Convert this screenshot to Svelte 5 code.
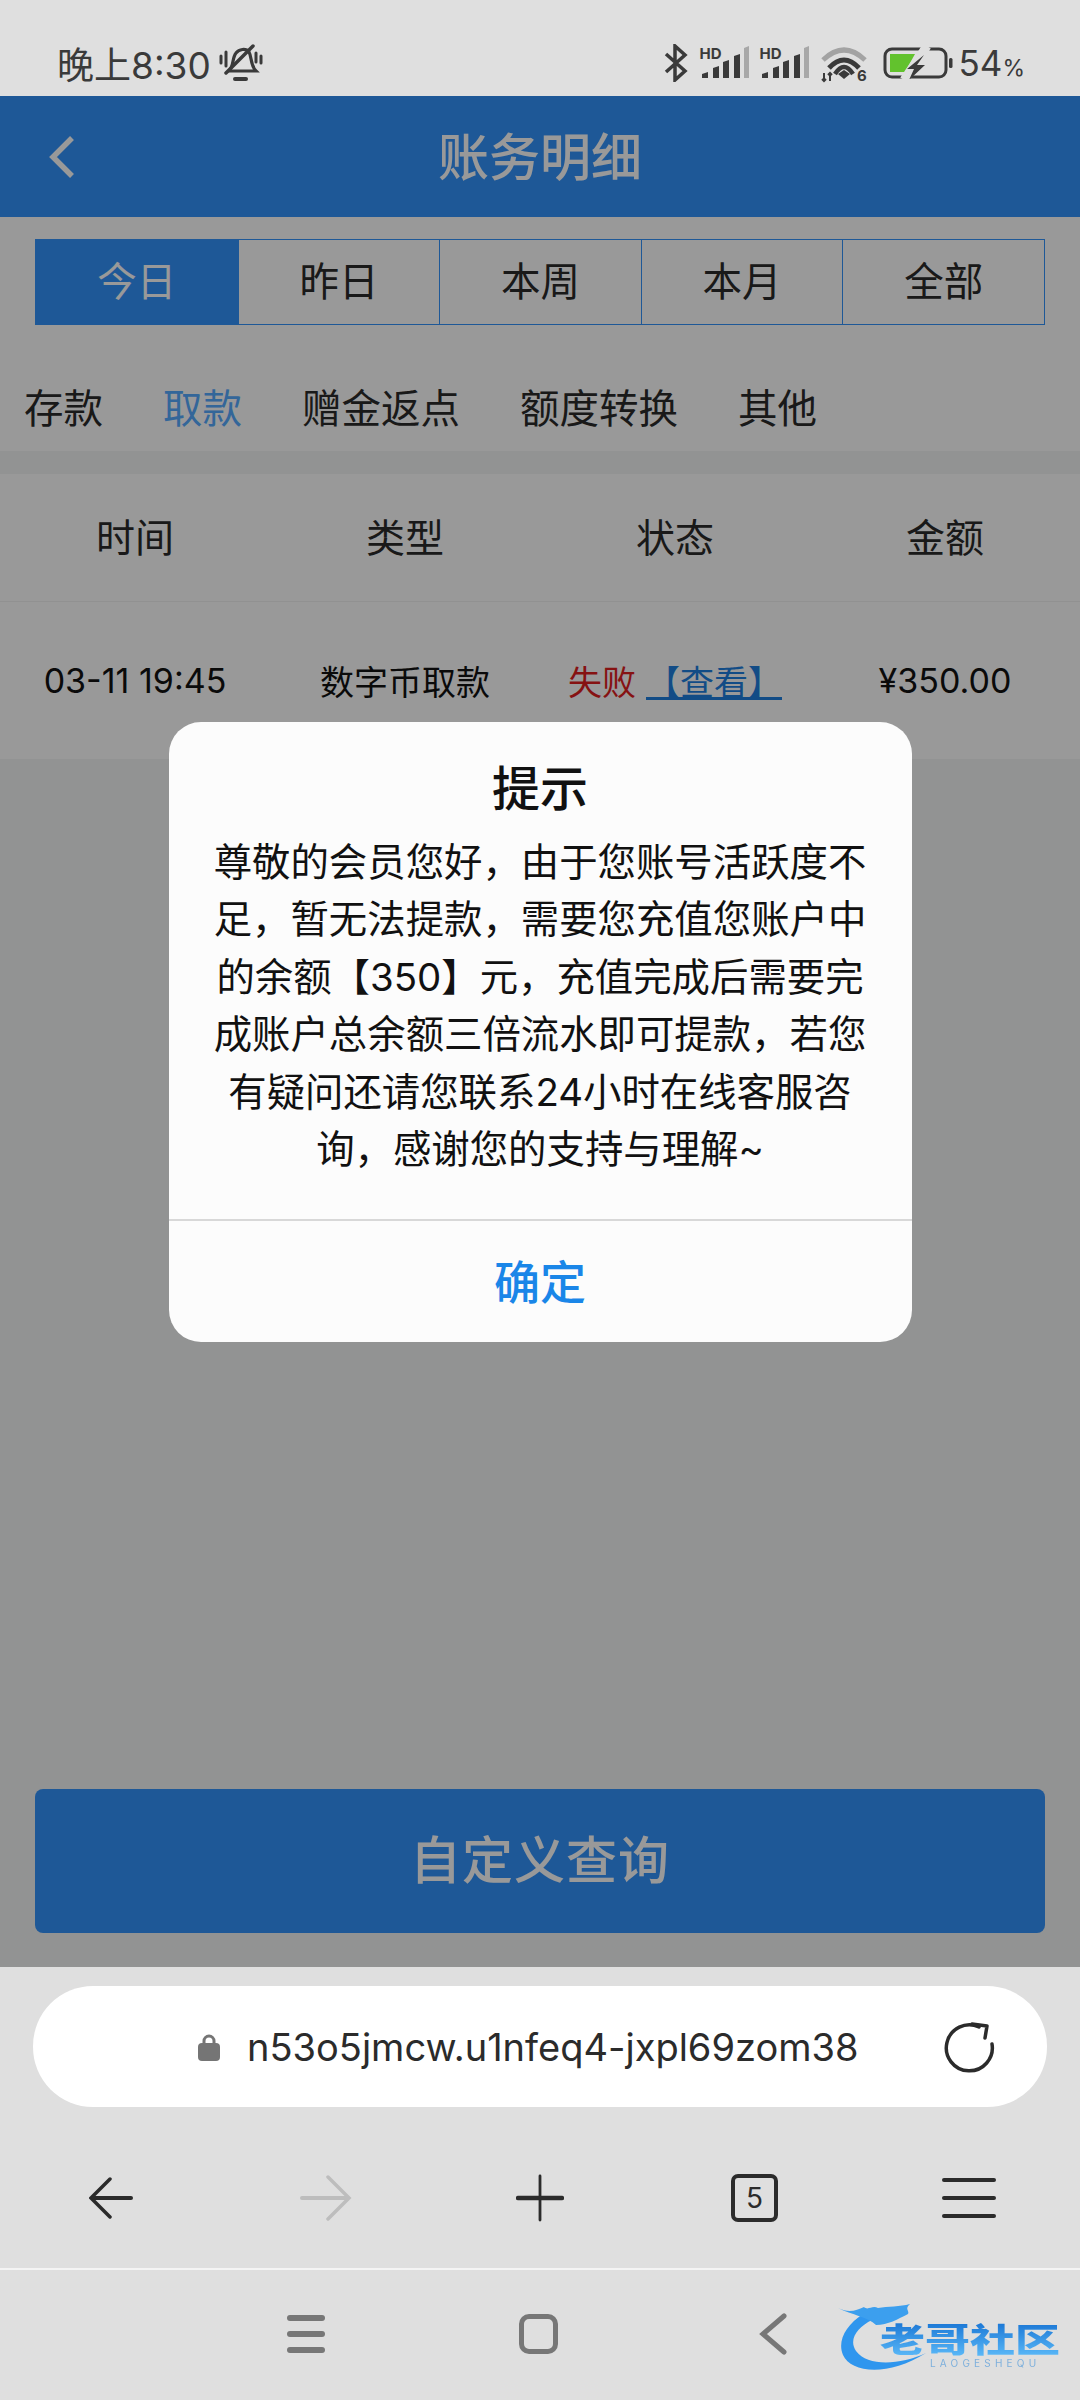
<script>
  const ranges = ['今日', '昨日', '本周', '本月', '全部'];
  const cats = ['存款', '取款', '赠金返点', '额度转换', '其他'];
  const cols = ['时间', '类型', '状态', '金额'];
  const bars = [
    { x: 2, top: 26 },
    { x: 13, top: 20 },
    { x: 23, top: 14 },
    { x: 34, top: 8 }
  ];
</script>

<div class="phone">
  <div class="status">
    <span class="time">晚上8:30</span>
    <svg class="bell" width="44" height="38" viewBox="0 0 44 38" fill="none" stroke="#3a3a3a" stroke-width="3.5" stroke-linecap="round">
      <path d="M10 27 C15 22 13 14 17 9 C20 5 27 4 30 8 C33 13 31 21 37 27 Z" stroke-width="3.2"/>
      <path d="M7 29 L34 2"/>
      <path d="M2 12v7M7 8v14M42 12v7M37 9v9" stroke-width="3"/>
      <path d="M16 35h11" stroke-width="4"/>
    </svg>
    <span class="spring"></span>
    <svg class="bt" width="24" height="38" viewBox="0 0 24 38" fill="none" stroke="#3a3a3a" stroke-width="3.5">
      <path d="M2 10 L21 27 L11 36 V2 L21 11 L2 28"/>
    </svg>
    {#each [0, 1] as n}
      <div class="signal">
        <span class="hd">HD</span>
        <svg width="49" height="32" viewBox="0 0 49 32">
          {#each bars as b}
            <path d="M{b.x} 32 V{b.top + 2} L{b.x + 6} {b.top} V32 Z" fill="#3a3a3a"/>
          {/each}
          <path d="M44 32 V2 L49 0 V32 Z" fill="#a8a8a8"/>
        </svg>
      </div>
    {/each}
    <svg class="wifi" width="48" height="44" viewBox="0 -4 48 44" fill="none">
      <path d="M2 15 Q23 -5 44 15" stroke="#a3a3a3" stroke-width="5"/>
      <path d="M8 23 Q23 7 38 23" stroke="#3a3a3a" stroke-width="5"/>
      <path d="M14 29 Q23 15 32 29" stroke="#3a3a3a" stroke-width="4.5"/>
      <path d="M23 25 L29 29 L23 34 L17 29 Z" fill="#3a3a3a"/>
      <path d="M3 28v8M1 34l2 2 2-2M9 36v-8M7 30l2-2 2 2" stroke="#3a3a3a" stroke-width="2"/>
      <text x="36" y="36" class="wifi-six">6</text>
    </svg>
    <svg class="battery" width="70" height="32" viewBox="0 0 70 32" fill="none">
      <rect x="2" y="2" width="61" height="28" rx="7" stroke="#3a3a3a" stroke-width="3"/>
      <path d="M7 7 H32 L22 25 H7 Z" fill="#62c22d"/>
      <path d="M44 -1 L21 33" stroke="#dfdfdf" stroke-width="9"/>
      <path d="M41 8 L24 22 H31 L26 33 L42 18 H34 Z" fill="#3a3a3a"/>
      <rect x="66" y="11" width="3.5" height="10" rx="1.5" fill="#3a3a3a"/>
    </svg>
    <span class="level">54<small>%</small></span>
  </div>

  <div class="page">
    <header class="bar">
      <svg class="back" width="30" height="44" viewBox="0 0 30 44" fill="none" stroke="#fff" stroke-width="5.5">
        <path d="M25 3 L6 22 L25 41"/>
      </svg>
      <h1>账务明细</h1>
    </header>

    <div class="top">
      <div class="ranges">
        {#each ranges as r, i}
          <div class="range" class:on={i === 0}>{r}</div>
        {/each}
      </div>
      <div class="cats">
        {#each cats as c, i}
          <span class="cat" class:on={i === 1}>{c}</span>
        {/each}
      </div>
    </div>

    <div class="table">
      <div class="thead">
        {#each cols as c}
          <div>{c}</div>
        {/each}
      </div>
      <div class="row">
        <div>03-11 19:45</div>
        <div>数字币取款</div>
        <div class="state"><span class="fail">失败</span><span class="view">【查看】</span></div>
        <div>¥350.00</div>
      </div>
    </div>

    <button class="query">自定义查询</button>

    <div class="mask">
      <div class="dialog">
        <div class="dialog-body">
          <h2>提示</h2>
          <p>尊敬的会员您好，由于您账号活跃度不足，暂无法提款，需要您充值您账户中的余额【350】元，充值完成后需要完成账户总余额三倍流水即可提款，若您有疑问还请您联系24小时在线客服咨询，感谢您的支持与理解~</p>
        </div>
        <div class="ok">确定</div>
      </div>
    </div>
  </div>

  <div class="browser">
    <div class="url">
      <svg class="lock" width="22" height="28" viewBox="0 0 22 28" fill="none">
        <path d="M6 13 V8 a5 5 0 0 1 10 0 V13" stroke="#757575" stroke-width="3"/>
        <rect x="0" y="10" width="22" height="18" rx="4" fill="#757575"/>
      </svg>
      <span class="addr">n53o5jmcw.u1nfeq4-jxpl69zom38</span>
      <svg class="reload" width="52" height="52" viewBox="0 0 52 52" fill="none" stroke="#2b2b2b" stroke-width="3.5" stroke-linecap="round" stroke-linejoin="round">
        <path d="M36 6 A23 23 0 1 0 49 23"/>
        <path d="M29 3 L44 5 L42 17"/>
      </svg>
    </div>
    <div class="tools">
      <svg width="44" height="42" viewBox="0 0 44 42" fill="none" stroke="#2b2b2b" stroke-width="3.5" stroke-linecap="round">
        <path d="M21 2 L2 21 L21 40"/>
        <path d="M4 21 H42" stroke-width="4"/>
      </svg>
      <svg width="52" height="46" viewBox="0 0 52 46" fill="none" stroke="#bdbdbd" stroke-width="3.5" stroke-linecap="round">
        <path d="M28 2 L49 23 L28 44"/>
        <path d="M2 23 H47" stroke-width="4"/>
      </svg>
      <svg width="48" height="48" viewBox="0 0 48 48" fill="none" stroke="#2b2b2b" stroke-linecap="round">
        <path d="M24 2 V46" stroke-width="2.8"/>
        <path d="M2 24 H46" stroke-width="4.5"/>
      </svg>
      <div class="count">5</div>
      <div class="burger"><i></i><i></i><i></i></div>
    </div>
    <div class="nav">
      <div class="nav-menu"><i></i><i></i><i></i></div>
      <div class="nav-home"></div>
      <svg width="28" height="42" viewBox="0 0 28 42" fill="none" stroke="#777" stroke-width="5" stroke-linecap="round">
        <path d="M25 3 L4 21 L25 39"/>
      </svg>
    </div>
    <div class="mark">
      <svg class="dragon" width="100" height="72" viewBox="0 0 100 72">
        <path d="M25 11 C8 22 -1 38 5 52 C13 70 50 74 88 50 C62 62 30 64 18 48 C10 36 20 24 34 17 Z" fill="#2f96ee"/>
        <path d="M0 5 C10 10 18 8 26 4 C30 8 34 2 40 5 C50 3 62 4 72 1 C66 6 72 8 70 11 C60 16 50 22 38 22 C30 14 14 12 0 5 Z" fill="#3c9fee"/>
      </svg>
      <span class="mark-cn">老哥社区</span>
      <span class="mark-en">LAOGESHEQU</span>
    </div>
  </div>
</div>

<style>
  :global(body) {
    margin: 0;
  }

  .phone {
    position: relative;
    display: flex;
    flex-direction: column;
    width: 1080px;
    height: 2400px;
    overflow: hidden;
    font-family: Inter, "Noto Sans CJK SC", sans-serif;
    color: #2b2b2b;
    background: #dfdfdf;
  }

  .status {
    display: flex;
    align-items: center;
    box-sizing: border-box;
    height: 96px;
    padding: 30px 55px 0 57px;
    color: #3a3a3a;
  }

  .time {
    font-size: 37px;
  }

  .bell {
    margin-left: 8px;
  }

  .spring {
    flex: 1;
  }

  .signal {
    position: relative;
    width: 49px;
    height: 36px;
    margin-left: 11px;
    padding-top: 1px;
  }

  .bt + .signal {
    margin-left: 12px;
  }

  .signal svg {
    display: block;
  }

  .hd {
    position: absolute;
    top: 1px;
    left: 0;
    font-size: 15px;
    font-weight: 700;
    line-height: 1;
  }

  .wifi {
    margin-left: 12px;
  }

  .wifi-six {
    font-size: 15px;
    font-weight: 700;
    fill: #3a3a3a;
  }

  .battery {
    margin-left: 14px;
  }

  .level {
    margin-left: 6px;
    font-size: 35px;
  }

  .level small {
    font-size: 23px;
  }

  .page {
    position: relative;
    display: flex;
    flex-direction: column;
    height: 1871px;
    background: #f4f5f5;
  }

  .bar {
    position: relative;
    display: flex;
    align-items: center;
    justify-content: center;
    box-sizing: border-box;
    height: 121px;
    padding-bottom: 5px;
    background: #3393fc;
  }

  .bar h1 {
    margin: 0;
    font-size: 51px;
    font-weight: 500;
    color: #fff;
  }

  .back {
    position: absolute;
    top: 39px;
    left: 47px;
  }

  .top {
    height: 234px;
    padding-top: 22px;
    box-sizing: border-box;
    background: #fff;
  }

  .ranges {
    display: grid;
    grid-template-columns: repeat(5, 1fr);
    height: 86px;
    margin: 0 35px;
    border: 1.5px solid #3393fc;
    box-sizing: border-box;
  }

  .range {
    display: flex;
    align-items: center;
    justify-content: center;
    box-sizing: border-box;
    padding-bottom: 8px;
    font-size: 39.5px;
    border-left: 1.5px solid #3393fc;
  }

  .range:first-child {
    border-left: 0;
  }

  .range.on {
    color: #fff;
    background: #3393fc;
  }

  .cats {
    display: flex;
    gap: 60px;
    align-items: center;
    box-sizing: border-box;
    height: 126px;
    padding: 34px 0 0 24px;
    font-size: 39.5px;
  }

  .cat.on {
    color: #55aaff;
  }

  .table {
    margin-top: 23px;
    background: #fff;
  }

  .thead,
  .row {
    display: grid;
    grid-template-columns: repeat(4, 1fr);
    align-items: center;
    text-align: center;
  }

  .thead {
    box-sizing: border-box;
    height: 128px;
    padding-bottom: 6px;
    font-size: 39px;
    border-bottom: 1.5px solid #f2f2f2;
  }

  .row {
    height: 157px;
    font-size: 34px;
    color: #111;
  }

  .state {
    white-space: nowrap;
  }

  .fail {
    color: #e01f1f;
  }

  .view {
    margin-left: 10px;
    color: #1e7fe0;
    text-decoration: underline;
  }

  .query {
    display: block;
    width: 1010px;
    height: 144px;
    margin: auto 35px 34px;
    padding: 0 0 8px;
    border: 0;
    border-radius: 8px;
    font-family: inherit;
    font-size: 51px;
    font-weight: 500;
    letter-spacing: 1px;
    color: #fff;
    background: #3393fc;
  }

  .mask {
    position: absolute;
    inset: 0;
    display: flex;
    align-items: center;
    justify-content: center;
    background: rgba(0, 0, 0, 0.4);
  }

  .dialog {
    width: 743px;
    border-radius: 32px;
    overflow: hidden;
    text-align: center;
    background: #fcfcfc;
  }

  .dialog-body {
    height: 499px;
    padding: 31px 44px 0;
    box-sizing: border-box;
    border-bottom: 2px solid #d8d8d8;
  }

  .dialog h2 {
    margin: 0;
    font-size: 48px;
    font-weight: 500;
    line-height: 72px;
    color: #111;
  }

  .dialog p {
    margin: 9px 0 0;
    font-size: 38.4px;
    line-height: 57.6px;
    color: #111;
  }

  .ok {
    display: flex;
    align-items: center;
    justify-content: center;
    box-sizing: border-box;
    height: 121px;
    padding-bottom: 4px;
    font-size: 46px;
    font-weight: 500;
    color: #1a86e8;
  }

  .browser {
    position: relative;
    flex: 1;
    padding-top: 19px;
  }

  .url {
    display: flex;
    align-items: center;
    box-sizing: border-box;
    height: 121px;
    margin: 0 33px;
    padding: 0 52px 0 165px;
    border-radius: 60px;
    background: #fff;
  }

  .addr {
    margin-left: 27px;
    font-size: 38px;
    color: #2b2b2b;
  }

  .reload {
    margin-left: auto;
  }

  .tools {
    display: grid;
    grid-template-columns: repeat(5, 1fr);
    justify-items: center;
    align-items: center;
    box-sizing: border-box;
    width: 1080px;
    height: 163px;
    padding: 20px 4px 0;
    border-bottom: 2px solid #f4f4f4;
  }

  .count {
    display: flex;
    align-items: center;
    justify-content: center;
    box-sizing: border-box;
    width: 47px;
    height: 48px;
    border: 4px solid #2b2b2b;
    border-radius: 7px;
    font-size: 28px;
    color: #2b2b2b;
  }

  .burger {
    display: flex;
    flex-direction: column;
    gap: 14px;
    width: 54px;
  }

  .burger i {
    display: block;
    height: 4px;
    border-radius: 2px;
    background: #2b2b2b;
  }

  .nav {
    display: flex;
    align-items: center;
    height: 128px;
    padding-left: 287px;
  }

  .nav-menu {
    display: flex;
    flex-direction: column;
    gap: 10px;
    width: 38px;
  }

  .nav-menu i {
    display: block;
    height: 6px;
    border-radius: 3px;
    background: #777;
  }

  .nav-home {
    box-sizing: border-box;
    width: 39px;
    height: 40px;
    margin-left: 194px;
    border: 5px solid #777;
    border-radius: 10px;
  }

  .nav svg {
    margin-left: 201px;
  }

  .mark {
    position: absolute;
    top: 336px;
    left: 838px;
    width: 226px;
    height: 76px;
    filter: blur(0.7px);
  }

  .dragon {
    position: absolute;
    top: 0;
    left: 0;
  }

  .mark-cn {
    position: absolute;
    top: 14px;
    left: 42px;
    font-size: 45px;
    font-weight: 900;
    line-height: 1;
    white-space: nowrap;
    color: transparent;
    background: linear-gradient(#1c78d6, #5ab8f7);
    background-clip: text;
    -webkit-background-clip: text;
    transform: scaleY(0.74);
  }

  .mark-en {
    position: absolute;
    top: 54px;
    left: 92px;
    font-size: 10px;
    line-height: 13px;
    letter-spacing: 4.2px;
    color: #7eb0dc;
  }
</style>
